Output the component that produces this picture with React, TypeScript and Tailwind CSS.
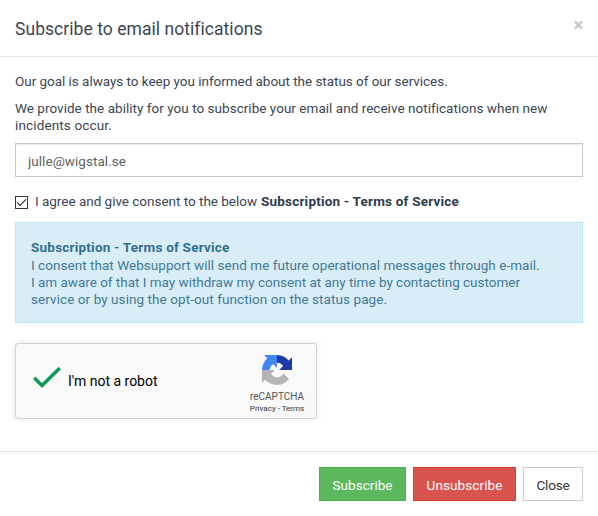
export default function App() {
  return (
    <div className="flex h-[516px] w-[598px] flex-col overflow-hidden bg-white font-[Roboto,sans-serif] text-[13.5px] leading-[17px] text-[#3b4654]">
      {/* Header */}
      <div className="flex h-[57px] items-center justify-between border-b border-[#e5e5e5] px-[15px]">
        <h4 className="pt-[2px] text-[17.5px] leading-5 tracking-[0.05px] whitespace-nowrap">
          Subscribe to email notifications
        </h4>
        <button aria-label="Close dialog" className="mb-[6px]">
          <svg width="9" height="8" viewBox="0 0 9 8" fill="none" stroke="#c8c8c8" strokeWidth="2.4">
            <path d="M1 0.5 8 7.5M8 0.5 1 7.5" />
          </svg>
        </button>
      </div>

      {/* Body */}
      <div className="h-[394px] px-[15px] pt-[16px]">
        <p className="tracking-[-0.035px] whitespace-nowrap">
          Our goal is always to keep you informed about the status of our services.
        </p>
        <p className="mt-[10px] whitespace-nowrap">
          <span className="block tracking-[0.03px]">
            We provide the ability for you to subscribe your email and receive notifications when new
          </span>
          <span className="block tracking-[0.14px]">incidents occur.</span>
        </p>

        <input
          type="text"
          defaultValue="julle@wigstal.se"
          className="mt-[9px] block h-[34px] w-full border border-[#c8c8c8] px-3 pt-[2px] tracking-[0.05px] text-[#606060] shadow-[inset_0_1px_1px_rgba(0,0,0,0.075)] outline-none"
        />

        <div className="mt-[16px] flex h-[17px] items-center whitespace-nowrap">
          <svg className="mt-px mr-[7px]" width="13" height="13" viewBox="0 0 13 13" fill="none" stroke="#333333">
            <rect x="0.5" y="0.5" width="12" height="12" />
            <path d="M2 6.3 5 9.3 11 3.3" strokeWidth="1.2" />
          </svg>
          <span className="tracking-[-0.02px]">I agree and give consent to the below</span>
          <strong className="ml-[4px] font-bold tracking-[0.2px] text-[#2f3b4b]">Subscription - Terms of Service</strong>
        </div>

        <div className="mt-[12px] h-[101px] border border-[#bce8f1] bg-[#d9edf7] px-[15px] pt-[16px] whitespace-nowrap text-[#3f7a98]">
          <strong className="block font-bold tracking-[0.22px] text-[#31708f]">Subscription - Terms of Service</strong>
          <span className="mt-px block tracking-[0.04px]">
            I consent that Websupport will send me future operational messages through e-mail.
          </span>
          <span className="block tracking-[-0.015px]">
            I am aware of that I may withdraw my consent at any time by contacting customer
          </span>
          <span className="block tracking-[0.073px]">
            service or by using the opt-out function on the status page.
          </span>
        </div>

        {/* Captcha */}
        <div className="mt-[20px] flex h-[76px] w-[302px] rounded-[3px] border border-[#d3d3d3] bg-[#f9f9f9] pl-[17px] text-black shadow-[0_0_4px_1px_rgba(0,0,0,0.08)]">
          <svg className="mt-[22px]" width="28" height="23" viewBox="0 0 28 23" fill="none" stroke="#0a9d58" strokeWidth="3.4">
            <path d="M1.2 11.8 9 19.5 26.8 2" />
          </svg>
          <span className="mt-[29px] ml-[7px] w-[166px] text-[14px] tracking-[-0.016px]">I'm not a robot</span>
          <div className="ml-[16px] flex w-[54px] flex-col items-center text-[#555555]">
            <svg className="mt-[11px]" width="30" height="30" viewBox="0 0 64 64">
              <path
                fill="#1c3aa9"
                d="M64 31.955l-.033-1.37V4.687l-7.16 7.16C50.948 4.674 42.033.093 32.05.093c-10.4 0-19.622 4.96-25.458 12.64l11.736 11.86a15.55 15.55 0 0 1 4.754-5.334c2.05-1.6 4.952-2.906 8.968-2.906.485 0 .86.057 1.135.163 4.976.393 9.288 3.14 11.828 7.124l-8.307 8.307L64 31.953"
              />
              <path
                fill="#4285f4"
                d="M31.862.094l-1.37.033H4.594l7.16 7.16C4.58 13.147 0 22.06 0 32.046c0 10.4 4.96 19.622 12.64 25.458L24.5 45.768a15.55 15.55 0 0 1-5.334-4.754c-1.6-2.05-2.906-4.952-2.906-8.968 0-.485.057-.86.163-1.135.393-4.976 3.14-9.288 7.124-11.828l8.307 8.307L31.86.095"
              />
              <path
                fill="#b4b4b4"
                d="M.001 32.045l.033 1.37v25.898l7.16-7.16c5.86 7.173 14.774 11.754 24.76 11.754 10.4 0 19.622-4.96 25.458-12.64l-11.736-11.86a15.55 15.55 0 0 1-4.754 5.334c-2.05 1.6-4.952 2.906-8.968 2.906-.485 0-.86-.057-1.135-.163-4.976-.393-9.288-3.14-11.828-7.124l8.307-8.307c-10.522.04-22.4.066-27.295-.005"
              />
            </svg>
            <span className="mt-[5px] text-[10px] leading-[13px]">reCAPTCHA</span>
            <span className="text-[8px] leading-[11px] whitespace-nowrap text-[#333333]">Privacy - Terms</span>
          </div>
        </div>
      </div>

      {/* Footer */}
      <div className="flex h-[65px] justify-end gap-[7px] border-t border-[#e5e5e5] px-[15px] pt-[15px]">
        <button className="h-[34px] w-[87px] border border-[#4cae4c] bg-[#5cb85c] pt-[2px] tracking-[0.05px] text-white">
          Subscribe
        </button>
        <button className="h-[34px] w-[103px] border border-[#d43f3a] bg-[#d9534f] pt-[2px] tracking-[0.1px] text-white">
          Unsubscribe
        </button>
        <button className="h-[34px] w-[60px] border border-[#cccccc] bg-white pt-[2px] tracking-[-0.18px] text-[#333333]">
          Close
        </button>
      </div>
    </div>
  )
}
